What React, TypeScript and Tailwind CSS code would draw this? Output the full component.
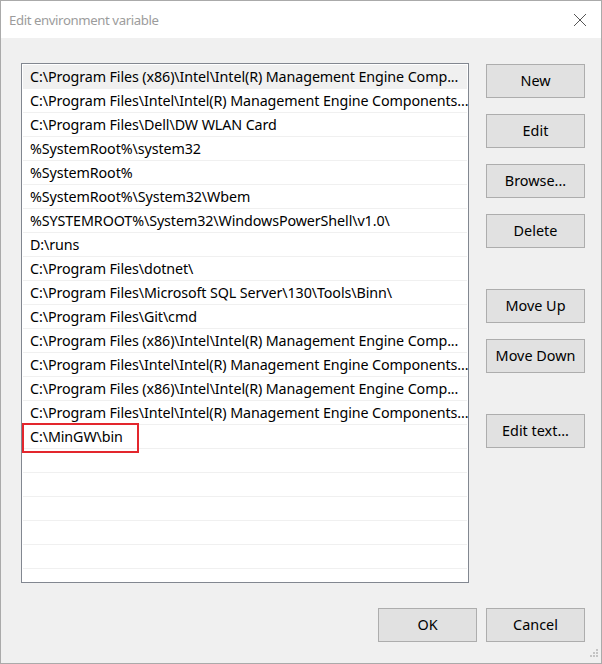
const entries = [
  'C:\\Program Files (x86)\\Intel\\Intel(R) Management Engine Comp...',
  'C:\\Program Files\\Intel\\Intel(R) Management Engine Components...',
  'C:\\Program Files\\Dell\\DW WLAN Card',
  '%SystemRoot%\\system32',
  '%SystemRoot%',
  '%SystemRoot%\\System32\\Wbem',
  '%SYSTEMROOT%\\System32\\WindowsPowerShell\\v1.0\\',
  'D:\\runs',
  'C:\\Program Files\\dotnet\\',
  'C:\\Program Files\\Microsoft SQL Server\\130\\Tools\\Binn\\',
  'C:\\Program Files\\Git\\cmd',
  'C:\\Program Files (x86)\\Intel\\Intel(R) Management Engine Comp...',
  'C:\\Program Files\\Intel\\Intel(R) Management Engine Components...',
  'C:\\Program Files (x86)\\Intel\\Intel(R) Management Engine Comp...',
  'C:\\Program Files\\Intel\\Intel(R) Management Engine Components...',
  'C:\\MinGW\\bin',
];

function WinButton({ label, className = '' }: { label: string; className?: string }) {
  return (
    <button
      className={`w-[99px] h-[34px] bg-[#e1e1e1] border border-[#adadad] text-[14.4px] text-black leading-none ${className}`}
    >
      {label}
    </button>
  );
}

export default function App() {
  return (
    <div
      className="w-[602px] h-[664px] border border-[#aaaaaa] flex flex-col bg-[#f0f0f0] select-none"
      style={{ fontFamily: '"Noto Sans", "Open Sans", sans-serif' }}
    >
      {/* Title bar */}
      <div className="h-[37px] bg-white flex items-center justify-between pl-[8px] pr-[14px]">
        <span className="text-[13.2px] tracking-[-0.4px] text-[#9c9c9c] mt-[3px]">Edit environment variable</span>
        <svg width="14" height="14" viewBox="0 0 14 14" className="mt-[1px]">
          <path d="M1 1 L13 13 M13 1 L1 13" stroke="#555" strokeWidth="1" fill="none" />
        </svg>
      </div>

      {/* Body */}
      <div className="flex-1 flex flex-col pl-[20px] pr-[16px] pt-[25px] pb-[21px] relative">
        <div className="flex gap-[17px]">
          {/* List */}
          <div className="w-[448px] h-[520px] bg-white border border-[#828790] p-[1px] overflow-hidden">
            {Array.from({ length: 22 }).map((_, i) => {
              const text = entries[i];
              return (
                <div
                  key={i}
                  className={`relative h-[24px] border-b border-[#f0f0f0] pl-[7px] flex items-center text-[14.3px] tracking-[-0.1px] text-black whitespace-nowrap ${
                    i === 0 ? 'bg-[#f0f0f0]' : ''
                  }`}
                >
                  {text ?? ''}
                  {i === 15 && (
                    <div className="absolute left-[-1px] top-[-2px] w-[117px] h-[30px] border-2 border-[#e3262d]" />
                  )}
                </div>
              );
            })}
          </div>

          {/* Side buttons */}
          <div className="flex flex-col pt-[1px]">
            <WinButton label="New" />
            <WinButton label="Edit" className="mt-[16px]" />
            <WinButton label="Browse..." className="mt-[16px]" />
            <WinButton label="Delete" className="mt-[16px]" />
            <WinButton label="Move Up" className="mt-[41px]" />
            <WinButton label="Move Down" className="mt-[16px]" />
            <WinButton label="Edit text..." className="mt-[41px]" />
          </div>
        </div>

        {/* Bottom buttons */}
        <div className="mt-auto flex justify-end gap-[9px]">
          <WinButton label="OK" />
          <WinButton label="Cancel" />
        </div>

        {/* Resize grip */}
        <svg width="12" height="12" viewBox="0 0 12 12" className="absolute right-[2px] bottom-[2px]">
          {[
            [9, 0],
            [6, 3],
            [9, 3],
            [3, 6],
            [6, 6],
            [9, 6],
          ].map(([x, y], k) => (
            <rect key={k} x={x} y={y} width="2" height="2" fill="#c4c4c4" />
          ))}
        </svg>
      </div>
    </div>
  );
}
